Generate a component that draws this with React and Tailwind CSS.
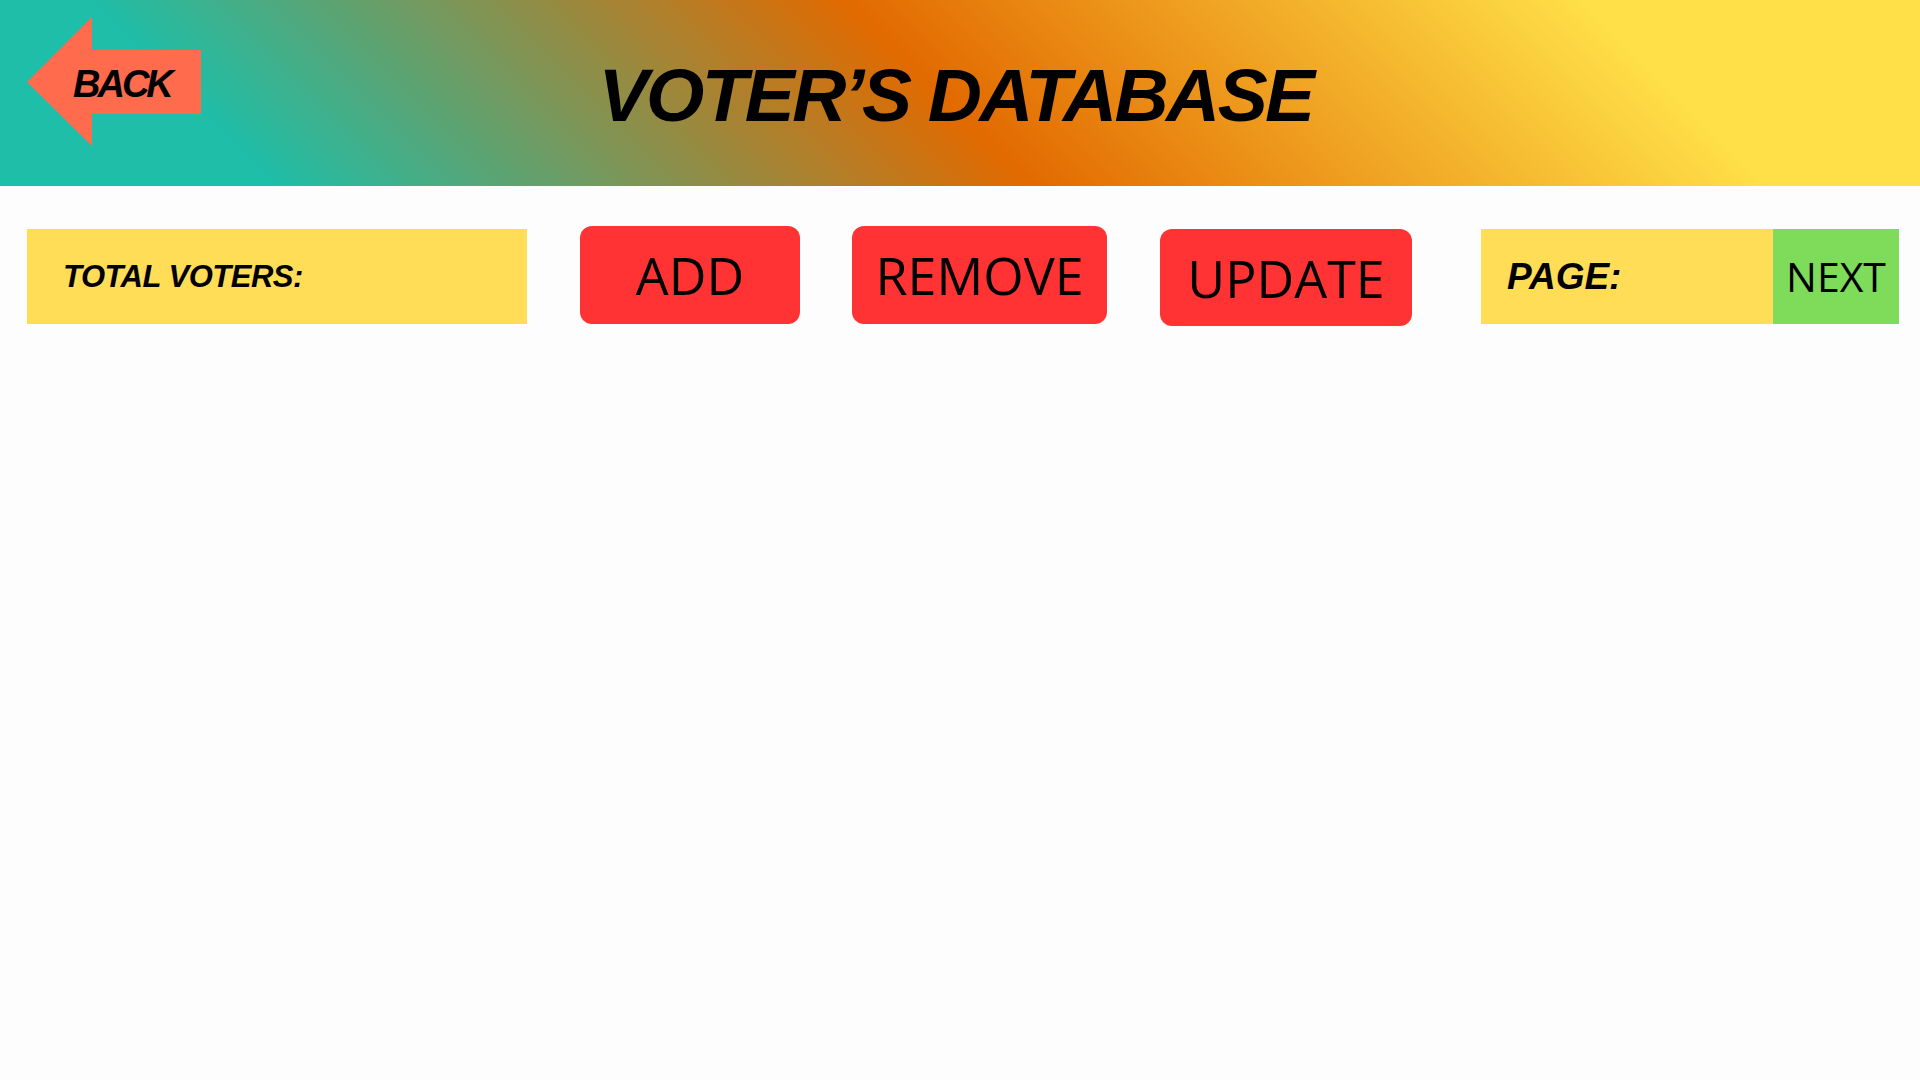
import React from 'react';

const BackArrow = () => (
    <button className="relative mt-[17px] h-[129px] w-[174px] self-start">
        <svg className="absolute inset-0" width="174" height="129" viewBox="0 0 174 129">
            <polygon points="0,65 65,0 65,33 174,33 174,97 65,97 65,129" fill="#ff6b4d" />
        </svg>
        <span className="relative block pl-[46px] pt-[4px] text-left font-['Liberation_Sans',sans-serif] text-[38px] font-bold italic leading-none tracking-[-3px] text-black">
            BACK
        </span>
    </button>
);

const RedButton = ({ label, className }) => (
    <button
        className={`flex items-center justify-center rounded-[12px] bg-[#ff3333] font-['Open_Sans',sans-serif] text-[52px] leading-none text-black ${className}`}
    >
        {label}
    </button>
);

const App = () => {
    return (
        <div className="min-h-screen w-full bg-[#fdfdfd]">
            {/* Header */}
            <header className="grid h-[186px] grid-cols-[1fr_auto_1fr] items-center bg-[linear-gradient(45deg,#1ebea8_13%,#e26a00_49%,#ffe048_84%)] pl-[27px]">
                <BackArrow />
                <h1 className="-ml-[36px] pt-[4px] font-['Liberation_Sans',sans-serif] text-[75px] font-bold italic leading-none tracking-[-2.6px] text-black">
                    VOTER’S DATABASE
                </h1>
                <div />
            </header>

            {/* Toolbar */}
            <div className="flex items-start pl-[27px] pt-[40px]">
                <div className="mt-[3px] flex h-[95px] w-[500px] items-center bg-[#ffdd57] pl-[36px]">
                    <span className="font-['Liberation_Sans',sans-serif] text-[31px] font-bold italic leading-none tracking-[-0.5px] text-black">
                        TOTAL VOTERS:
                    </span>
                </div>

                <RedButton label="ADD" className="ml-[53px] h-[98px] w-[220px]" />
                <RedButton label="REMOVE" className="ml-[52px] h-[98px] w-[255px]" />
                <RedButton label="UPDATE" className="ml-[53px] mt-[3px] h-[97px] w-[252px]" />

                <div className="ml-[69px] mt-[3px] flex h-[95px]">
                    <div className="flex w-[292px] items-center bg-[#ffdd57] pl-[26px]">
                        <span className="font-['Liberation_Sans',sans-serif] text-[37px] font-bold italic leading-none text-black">
                            PAGE:
                        </span>
                    </div>
                    <button className="flex w-[126px] items-center justify-center bg-[#7fdb5a] font-['Open_Sans',sans-serif] text-[41px] leading-none text-black">
                        NEXT
                    </button>
                </div>
            </div>
        </div>
    );
};

export default App;
